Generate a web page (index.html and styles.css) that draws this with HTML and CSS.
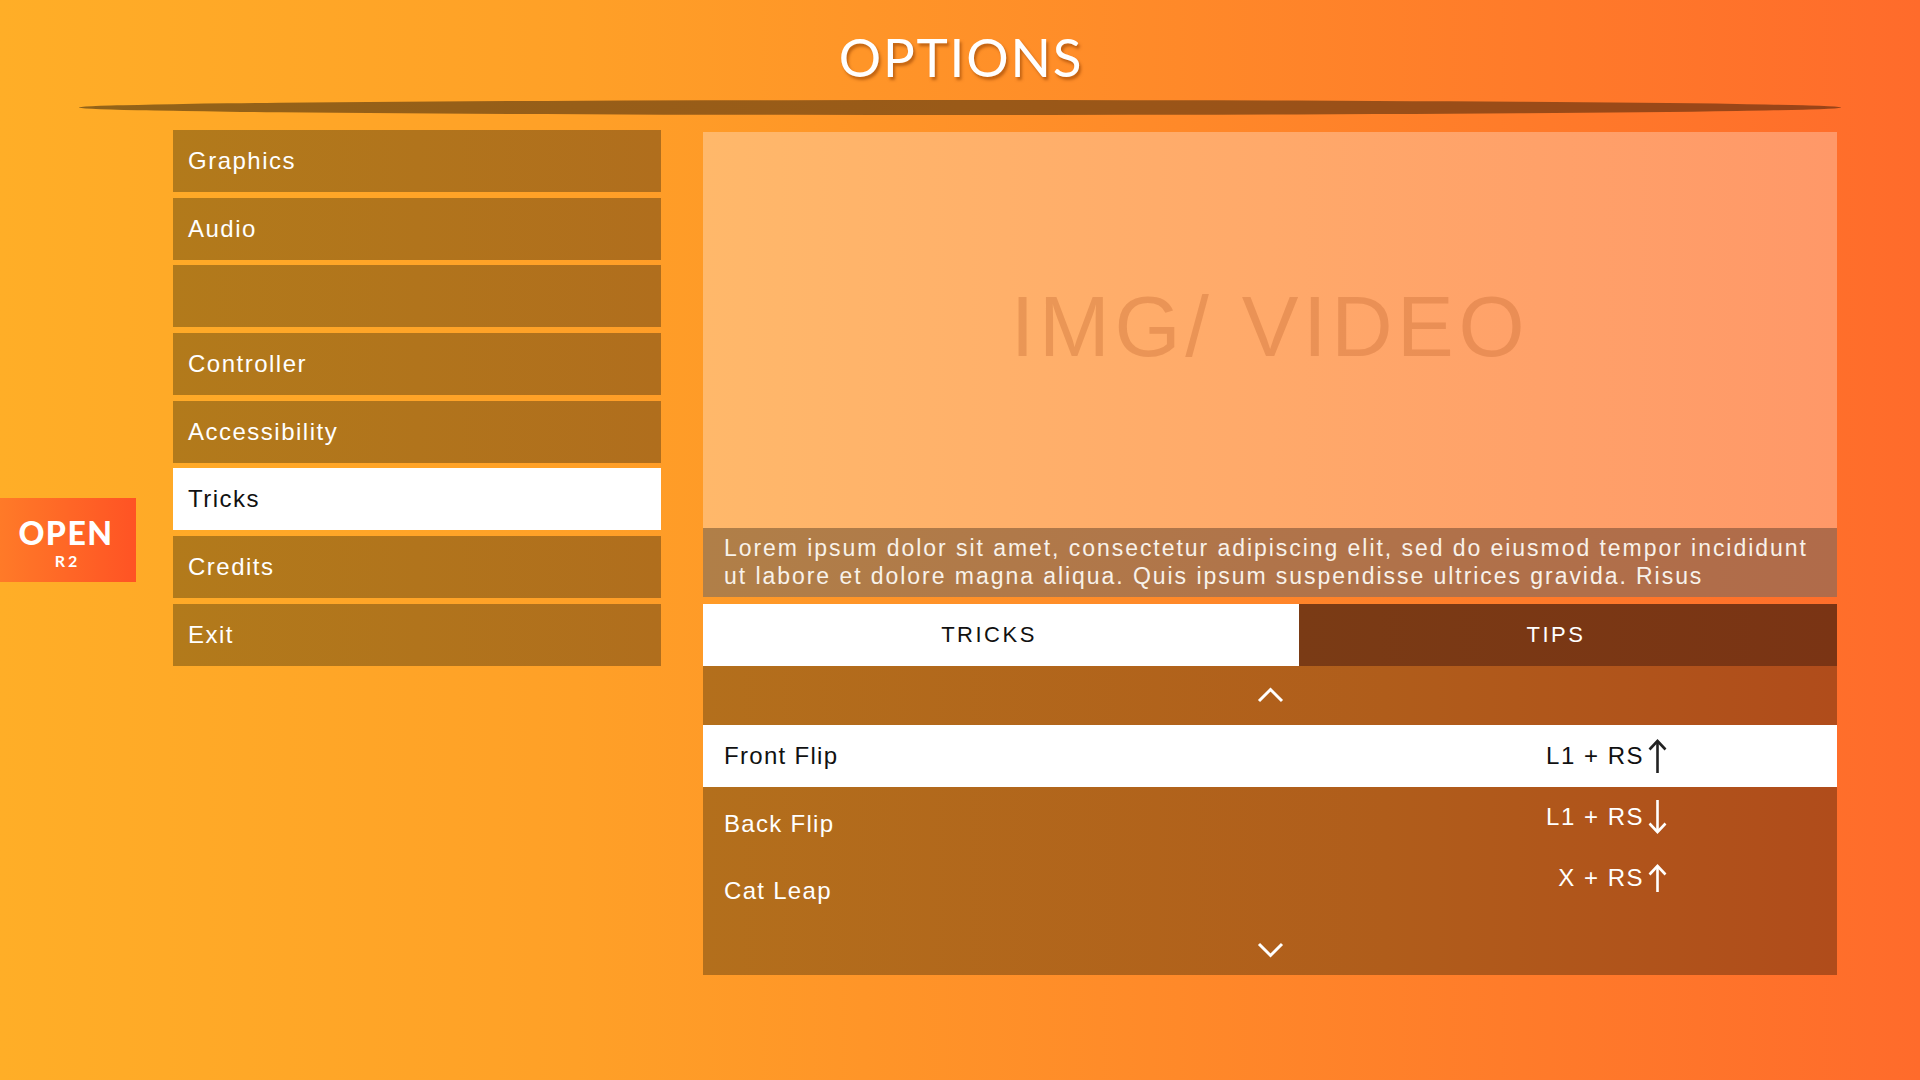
FILE: index.html
```html
<!DOCTYPE html>
<html lang="en">
<head>
<meta charset="utf-8">
<title>Options</title>
<link rel="stylesheet" href="styles.css">
</head>
<body>
<div class="screen">
  <header class="header">
    <h1 class="title">OPTIONS</h1>
    <div class="divider"></div>
  </header>
  <main class="content">
    <div class="badge">
      <span class="badge-main">OPEN</span>
      <span class="badge-sub">R2</span>
    </div>
    <nav class="menu">
      <div class="menu-item">Graphics</div>
      <div class="menu-item">Audio</div>
      <div class="menu-item"></div>
      <div class="menu-item">Controller</div>
      <div class="menu-item">Accessibility</div>
      <div class="menu-item menu-item--active">Tricks</div>
      <div class="menu-item">Credits</div>
      <div class="menu-item">Exit</div>
    </nav>
    <section class="panel">
      <div class="media">
        <span class="media-label">IMG/ VIDEO</span>
      </div>
      <div class="caption">
        <p class="caption-text">Lorem ipsum dolor sit amet, consectetur adipiscing elit, sed do eiusmod tempor incididunt<br>ut labore et dolore magna aliqua. Quis ipsum suspendisse ultrices gravida. Risus</p>
      </div>
      <div class="tabs">
        <div class="tab tab--active">TRICKS</div>
        <div class="tab tab--inactive">TIPS</div>
      </div>
      <div class="list">
        <div class="chev-row chev-row--up">
          <svg class="chev" width="27" height="16" viewBox="0 0 27 16"><polyline points="2,14 13.5,2.5 25,14" fill="none" stroke="#ffffff" stroke-width="3"/></svg>
        </div>
        <div class="rows">
          <div class="row row--active">
            <span class="row-label">Front Flip</span>
            <span class="row-key">L1 + RS
              <svg class="arrow" width="19" height="34" viewBox="0 0 19 34"><line x1="9.5" y1="2" x2="9.5" y2="34" stroke="#222222" stroke-width="2.6"/><polyline points="1.5,10.5 9.5,2 17.5,10.5" fill="none" stroke="#222222" stroke-width="2.6"/></svg>
            </span>
          </div>
          <div class="row">
            <span class="row-label">Back Flip</span>
            <span class="row-key row-key--second">L1 + RS
              <svg class="arrow" width="19" height="34" viewBox="0 0 19 34"><line x1="9.5" y1="0" x2="9.5" y2="32" stroke="#ffffff" stroke-width="2.6"/><polyline points="1.5,23.5 9.5,32 17.5,23.5" fill="none" stroke="#ffffff" stroke-width="2.6"/></svg>
            </span>
          </div>
          <div class="row">
            <span class="row-label">Cat Leap</span>
            <span class="row-key row-key--third">X + RS
              <svg class="arrow" width="19" height="28" viewBox="0 0 19 28"><line x1="9.5" y1="2" x2="9.5" y2="28" stroke="#ffffff" stroke-width="2.6"/><polyline points="1.5,10.5 9.5,2 17.5,10.5" fill="none" stroke="#ffffff" stroke-width="2.6"/></svg>
            </span>
          </div>
        </div>
        <div class="chev-row chev-row--down">
          <svg class="chev" width="27" height="16" viewBox="0 0 27 16"><polyline points="2,2 13.5,13.5 25,2" fill="none" stroke="#ffffff" stroke-width="3"/></svg>
        </div>
      </div>
    </section>
  </main>
</div>
</body>
</html>
```
FILE: styles.css
```css
* { box-sizing: border-box; }

html, body {
  margin: 0;
  padding: 0;
}

body {
  width: 1920px;
  height: 1080px;
  overflow: hidden;
  font-family: "Liberation Sans", Arial, sans-serif;
  background: linear-gradient(90deg, #ffae27 0%, #ffa027 30%, #ff8a29 60%, #ff6b2b 100%);
}

.screen {
  width: 1920px;
  height: 1080px;
  display: flex;
  flex-direction: column;
}

.header {
  display: flex;
  flex-direction: column;
  align-items: center;
  padding-top: 30px;
}

.title {
  margin: 0;
  font-family: "Lato", "DejaVu Sans", sans-serif;
  font-weight: 400;
  font-size: 53px;
  line-height: 53px;
  height: 53px;
  letter-spacing: 1.8px;
  padding-left: 2px;
  color: #ffffff;
  text-shadow: 2px 3px 3px rgba(140, 60, 0, 0.55);
}

.divider {
  margin-top: 17px;
  width: 1762px;
  height: 15px;
  border-radius: 50%;
  background: linear-gradient(90deg, #936318 0%, #9a5a18 50%, #9a4318 100%);
}

.content {
  display: flex;
  align-items: flex-start;
  margin-top: 15px;
}

.badge {
  margin-top: 368px;
  width: 136px;
  height: 84px;
  display: flex;
  flex-direction: column;
  align-items: center;
  padding-top: 19px;
  padding-right: 4px;
  background: linear-gradient(90deg, #ff7a28 0%, #ff5324 100%);
  color: #ffffff;
  font-family: "Lato", "DejaVu Sans", sans-serif;
}

.badge-main {
  font-weight: 900;
  font-size: 32px;
  line-height: 32px;
  letter-spacing: 1.5px;
}

.badge-sub {
  margin-top: 4px;
  font-weight: 700;
  font-size: 16px;
  line-height: 16px;
  letter-spacing: 3px;
  padding-left: 3px;
}

.menu {
  margin-left: 37px;
  width: 488px;
  display: flex;
  flex-direction: column;
  gap: 5.7px;
}

.menu-item {
  height: 62px;
  line-height: 61px;
  padding-left: 15px;
  font-size: 24px;
  letter-spacing: 1.5px;
  color: #ffffff;
  background: linear-gradient(90deg, #b27a1b 0%, #b06e1d 100%);
}

.menu-item--active {
  background: #ffffff;
  color: #111111;
}

.panel {
  margin-left: 42px;
  margin-top: 2px;
  width: 1134px;
  display: flex;
  flex-direction: column;
}

.media {
  height: 396px;
  display: flex;
  align-items: center;
  justify-content: center;
  padding-bottom: 8px;
  background: linear-gradient(90deg, #ffb86a 0%, #ffa96a 50%, #ff9868 100%);
}

.media-label {
  font-size: 85px;
  letter-spacing: 4.6px;
  color: rgba(190, 100, 45, 0.32);
  line-height: 1;
}

.caption {
  height: 69px;
  padding: 6px 22px 0 21px;
  overflow: hidden;
  background: linear-gradient(90deg, #b07f48 0%, #b0744a 50%, #b06b4a 100%);
}

.caption-text {
  margin: 0;
  font-size: 23px;
  line-height: 28px;
  letter-spacing: 1.95px;
  white-space: nowrap;
  color: #f8f2ea;
}

.tabs {
  margin-top: 7px;
  display: flex;
  height: 62px;
}

.tab {
  display: flex;
  align-items: center;
  justify-content: center;
  padding-right: 24px;
  font-size: 22px;
  letter-spacing: 2.5px;
}

.tab--active {
  width: 596px;
  background: #ffffff;
  color: #111111;
}

.tab--inactive {
  flex: 1;
  background: linear-gradient(90deg, #7a3b15 0%, #7a3414 100%);
  color: #ffffff;
}

.list {
  display: flex;
  flex-direction: column;
  background: linear-gradient(90deg, #b36f1c 0%, #b05d1b 60%, #b04c1b 100%);
}

.chev-row {
  display: flex;
  align-items: center;
  justify-content: center;
}

.chev-row--up { height: 59px; padding-bottom: 2px; }
.chev-row--down { height: 53px; padding-top: 2px; }

.rows {
  display: flex;
  flex-direction: column;
  gap: 5.5px;
}

.row {
  height: 62px;
  display: flex;
  align-items: flex-start;
  justify-content: space-between;
  padding: 0 170px 0 21px;
  color: #ffffff;
}

.row--active {
  background: #ffffff;
  color: #111111;
}

.row-label {
  font-size: 24px;
  line-height: 61px;
  letter-spacing: 1.3px;
}

.row-key {
  height: 62px;
  display: flex;
  align-items: center;
  gap: 4px;
  font-size: 24px;
  letter-spacing: 1.5px;
}

.row-key--second { margin-top: -7px; }
.row-key--third { margin-top: -13px; }

.arrow { display: block; }
.chev { display: block; }
```
